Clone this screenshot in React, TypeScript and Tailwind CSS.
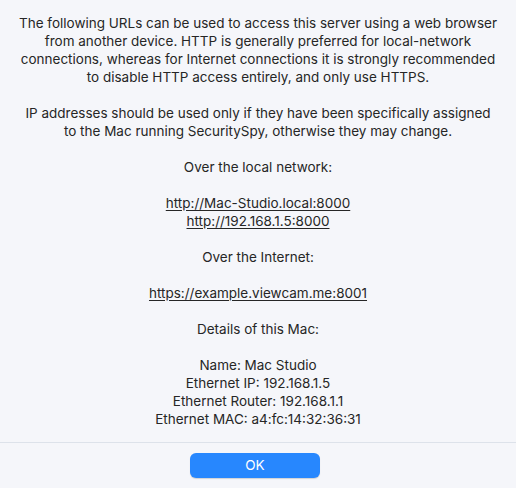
const intro = [
  "The following URLs can be used to access this server using a web browser",
  "from another device. HTTP is generally preferred for local-network",
  "connections, whereas for Internet connections it is strongly recommended",
  "to disable HTTP access entirely, and only use HTTPS.",
];

const ipNote = [
  "IP addresses should be used only if they have been specifically assigned",
  "to the Mac running SecuritySpy, otherwise they may change.",
];

const localUrls = ["http://Mac-Studio.local:8000", "http://192.168.1.5:8000"];

const details = [
  "Name: Mac Studio",
  "Ethernet IP: 192.168.1.5",
  "Ethernet Router: 192.168.1.1",
  "Ethernet MAC: a4:fc:14:32:36:31",
];

function Lines({ lines }: { lines: string[] }) {
  return (
    <div>
      {lines.map((l) => (
        <div key={l}>{l}</div>
      ))}
    </div>
  );
}

function Links({ urls }: { urls: string[] }) {
  return (
    <div>
      {urls.map((u) => (
        <div key={u}>
          <a href="#" className="underline underline-offset-2">
            {u}
          </a>
        </div>
      ))}
    </div>
  );
}

export default function App() {
  return (
    <div
      className="w-[516px] h-[488px] bg-[#f5f6fa] text-[#262626] flex flex-col overflow-hidden"
      style={{ fontFamily: "Inter, 'Noto Sans', sans-serif" }}
    >
      <div className="flex-1 pt-[14px] flex flex-col gap-[18px] text-center text-[13.5px] leading-[18px]">
        <Lines lines={intro} />
        <Lines lines={ipNote} />
        <div>Over the local network:</div>
        <Links urls={localUrls} />
        <div>Over the Internet:</div>
        <Links urls={["https://example.viewcam.me:8001"]} />
        <div>Details of this Mac:</div>
        <Lines lines={details} />
      </div>
      <div className="h-[46px] border-t border-[#dde2ea] flex items-start justify-center pt-[10px] pr-[6px]">
        <button className="w-[130px] h-[25px] rounded-[6px] bg-[#2787fe] text-white text-[13.5px] shadow-[0_1px_1px_rgba(0,0,0,0.15)]">
          OK
        </button>
      </div>
    </div>
  );
}
